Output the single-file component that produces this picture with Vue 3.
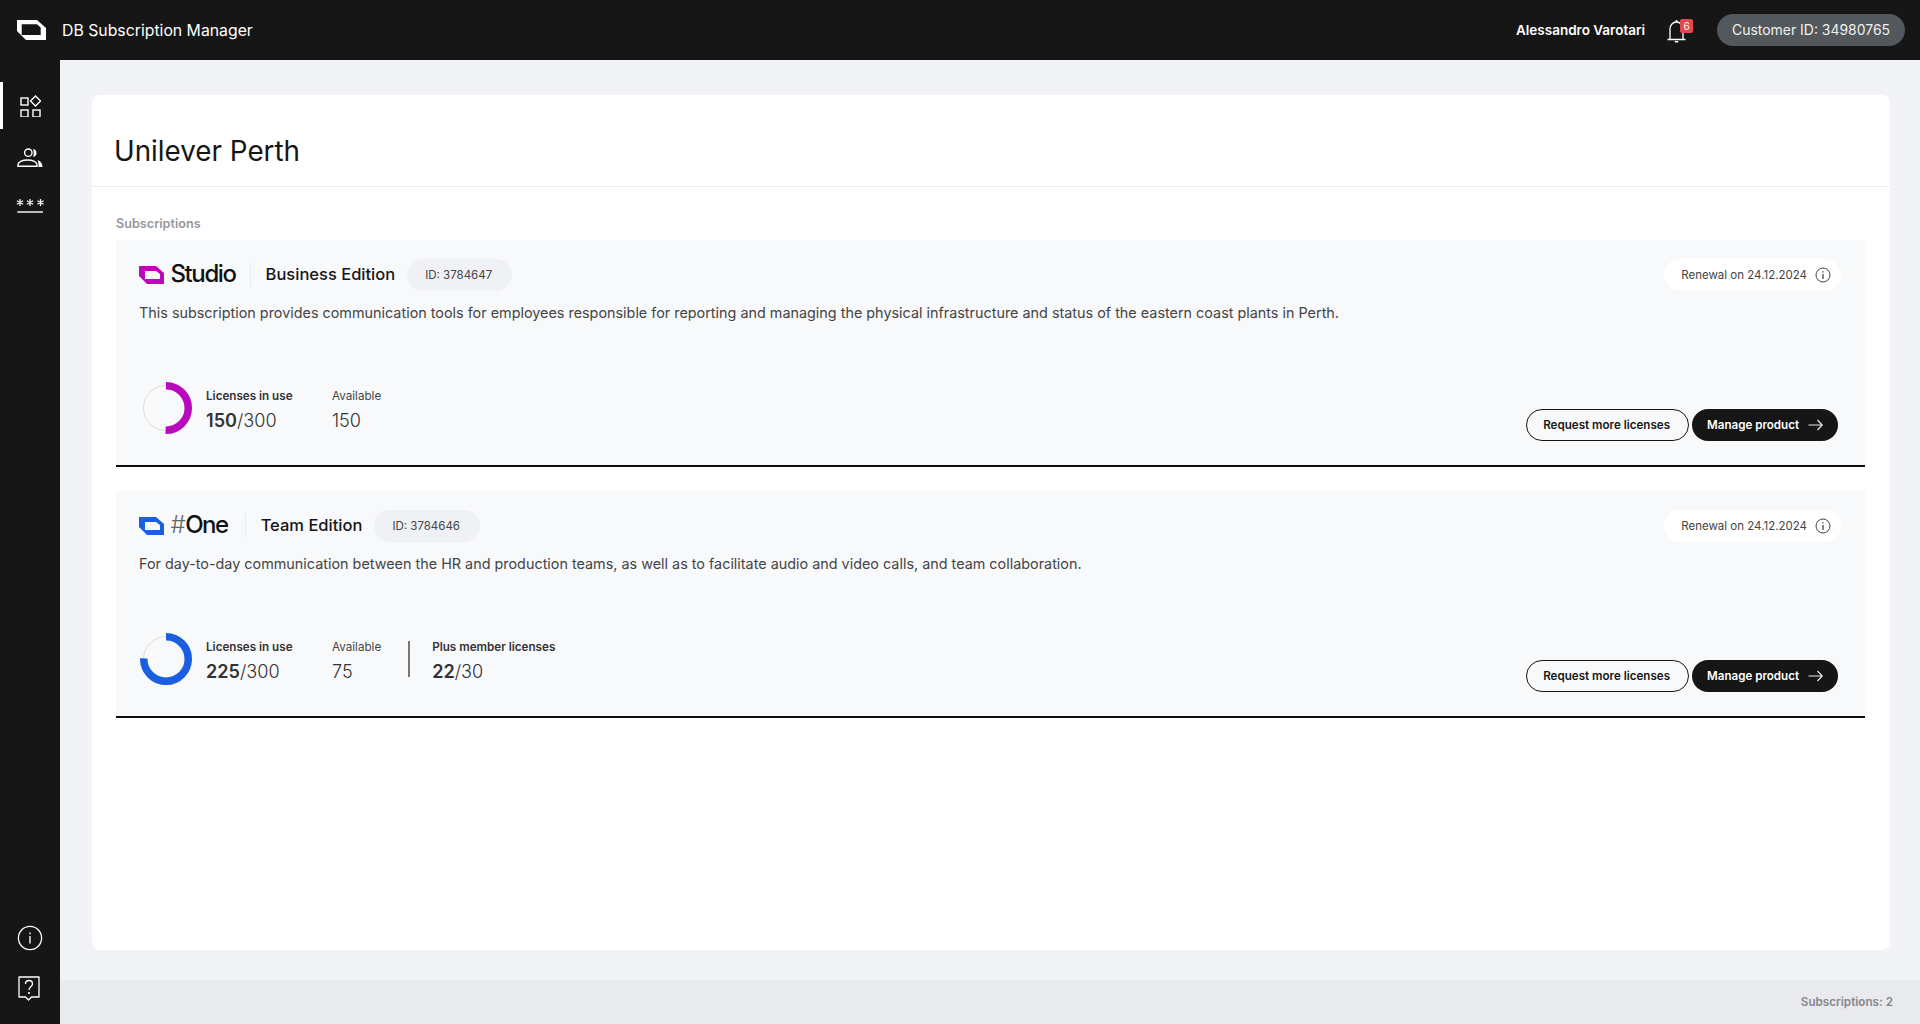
<script setup>
const subs = [
  {
    id: '3784647', name: 'Studio', hash: '', edition: 'Business Edition', color: '#b80abc',
    desc: 'This subscription provides communication tools for employees responsible for reporting and managing the physical infrastructure and status of the eastern coast plants in Perth.',
    used: 150, total: 300, available: 150, plus: null
  },
  {
    id: '3784646', name: 'One', hash: '#', edition: 'Team Edition', color: '#1a5fe0',
    desc: 'For day-to-day communication between the HR and production teams, as well as to facilitate audio and video calls, and team collaboration.',
    used: 225, total: 300, available: 75, plus: { used: 22, total: 30 }
  }
]
const r = 22.25
const circ = 2 * Math.PI * r
const dash = (s) => `${(s.used / s.total) * circ} ${circ}`
const starCenters = [5, 15, 25.5]
const spokes = (cx) => `M${cx} 2V9M${cx - 3.1} 3.7L${cx + 3.1} 7.3M${cx - 3.1} 7.3L${cx + 3.1} 3.7`
</script>

<template>
  <div class="app">
    <header class="topbar">
      <div class="brand">
        <svg class="brand-logo" viewBox="0 0 29 20" width="29" height="20">
          <path fill="#fff" fill-rule="evenodd" d="M0 0H20L29 8V20H9L0 11ZM4.700 4.300V15H23.700V7.500L20 4.300Z" />
        </svg>
        <span class="brand-name">DB Subscription Manager</span>
      </div>
      <div class="top-right">
        <span class="user">Alessandro Varotari</span>
        <div class="bell">
          <svg viewBox="0 0 20 25" width="20" height="25" fill="none" stroke="#fff" stroke-width="1.300">
            <path d="M3 21V11C3 7 6 4 9.500 4S16 7 16 11V21M0.500 21.500H18.500" />
            <path d="M9.500 2V4M7.800 23.800H11.200" stroke-width="1.600" />
          </svg>
          <span class="badge">6</span>
        </div>
        <span class="customer">Customer ID: 34980765</span>
      </div>
    </header>

    <div class="body">
      <nav class="sidebar">
        <div class="nav-top">
          <a class="nav-item active">
            <svg viewBox="0 0 22 22" width="22" height="22" fill="none" stroke="#fff" stroke-width="1.400">
              <rect x="2" y="3" width="7" height="7" />
              <path d="M16.500 1 21.500 6 16.500 11 11.500 6Z" />
              <rect x="2" y="15" width="7" height="7" />
              <rect x="14" y="15" width="7" height="7" />
            </svg>
          </a>
          <a class="nav-item">
            <svg viewBox="0 0 26 20" width="26" height="20" fill="none" stroke="#fff" stroke-width="1.400">
              <circle cx="11.300" cy="4.700" r="3.700" />
              <path d="M1 18.300V16.500C1 14 5 12 10.500 12S20 14 20 16.500V18.300H1Z" />
              <path d="M16 1C18.500 1.500 19.500 3 19.500 5S18.500 8.500 16 9C17 7 17 3 16 1Z" fill="#fff" stroke="none" />
              <path d="M20.500 12C23.500 13 25.500 15.500 25.500 19H21.500C21.500 16 21.500 14 20.500 12Z" fill="#fff" stroke="none" />
            </svg>
          </a>
          <a class="nav-item stars">
            <svg viewBox="0 0 30 20" width="30" height="20" fill="none" stroke="#f2f2f2" stroke-width="1.300">
              <path v-for="c in starCenters" :key="c" :d="spokes(c)" />
              <path d="M2.300 15H28" stroke="#cfcfcf" stroke-width="1.800" />
            </svg>
          </a>
        </div>
        <div class="nav-bottom">
          <svg viewBox="0 0 26 26" width="26" height="26" fill="none" stroke="#fff" stroke-width="1.300">
            <circle cx="13" cy="13" r="11.600" />
            <path d="M13 11V18.500" stroke-width="1.800" stroke="#c8c8c8" />
            <path d="M13 7.500V9.200" stroke-width="1.800" stroke="#c8c8c8" />
          </svg>
          <svg class="help" viewBox="0 0 24 26" width="24" height="26" fill="none" stroke="#fff" stroke-width="1.300">
            <path d="M2 1H22V21H14.500L11.500 24 8.500 21H2Z" stroke-linejoin="round" />
            <path d="M8.500 8C8.500 5.500 10 4.500 12 4.500S15.500 6 15.500 8C15.500 10.500 12 10.500 12 14" />
            <path d="M12 16V18" stroke-width="1.600" />
          </svg>
        </div>
      </nav>

      <main class="main">
        <div class="content">
          <section class="panel">
            <div class="panel-head">
              <h1>Unilever Perth</h1>
            </div>
            <div class="panel-body">
              <div class="label">Subscriptions</div>
              <div class="list">
                <article v-for="s in subs" :key="s.id" class="sub">
                  <div class="sub-top">
                    <div class="sub-title">
                      <svg class="sub-logo" viewBox="0 0 25 18" width="25" height="18">
                        <path :fill="s.color" fill-rule="evenodd" d="M0 0H17L25 7V18H8L0 10ZM6 5V13H21V8L17 5Z" />
                      </svg>
                      <span class="product" :class="{ 'product-hash': s.hash }"><span v-if="s.hash" class="hash">{{ s.hash }}</span>{{ s.name }}</span>
                      <span class="divider"></span>
                      <span class="edition">{{ s.edition }}</span>
                      <span class="id-pill">ID: {{ s.id }}</span>
                    </div>
                    <div class="renewal">
                      <span>Renewal on 24.12.2024</span>
                      <svg viewBox="0 0 16 16" width="16" height="16" fill="none" stroke="#444" stroke-width="1">
                        <circle cx="8" cy="8" r="7" />
                        <path d="M8 7V12M8 4.200V5.600" stroke-width="1.300" />
                      </svg>
                    </div>
                  </div>
                  <p class="desc">{{ s.desc }}</p>
                  <div class="sub-bottom">
                    <div class="stats">
                      <svg class="donut" viewBox="0 0 52 52" width="52" height="52">
                        <circle cx="26" cy="26" r="22.500" fill="none" stroke="#dcdcdc" stroke-width="1" />
                        <circle cx="26" cy="26" :r="r" fill="none" :stroke="s.color" stroke-width="7.500"
                          :stroke-dasharray="dash(s)" transform="rotate(-90 26 26)" />
                      </svg>
                      <div class="stat stat-use">
                        <span class="stat-label strong">Licenses in use</span>
                        <span class="stat-value"><b>{{ s.used }}</b>/{{ s.total }}</span>
                      </div>
                      <div class="stat">
                        <span class="stat-label">Available</span>
                        <span class="stat-value">{{ s.available }}</span>
                      </div>
                      <template v-if="s.plus">
                        <span class="stat-sep"></span>
                        <div class="stat">
                          <span class="stat-label strong">Plus member licenses</span>
                          <span class="stat-value"><b>{{ s.plus.used }}</b>/{{ s.plus.total }}</span>
                        </div>
                      </template>
                    </div>
                    <div class="actions">
                      <button class="btn outline">Request more licenses</button>
                      <button class="btn solid">
                        Manage product
                        <svg viewBox="0 0 15 12" width="15" height="12" fill="none" stroke="#e8e8e8" stroke-width="1.200">
                          <path d="M0.500 6H14M9.500 1 14.200 6 9.500 11" />
                        </svg>
                      </button>
                    </div>
                  </div>
                </article>
              </div>
            </div>
          </section>
        </div>
        <footer class="footer">Subscriptions: 2</footer>
      </main>
    </div>
  </div>
</template>

<style>
html, body { margin: 0; padding: 0; }
</style>

<style scoped>
.app {
  width: 1920px;
  height: 1024px;
  display: flex;
  flex-direction: column;
  overflow: hidden;
  font-family: Inter, "Liberation Sans", sans-serif;
  color: #161616;
}
.topbar {
  height: 60px;
  flex: none;
  background: #161616;
  display: flex;
  align-items: center;
  justify-content: space-between;
  padding: 0 15px 0 17px;
}
.brand { display: flex; align-items: center; gap: 16px; }
.brand-logo { display: block; margin-top: -1px; }
.brand-name { color: #fff; font-size: 15.800px; font-weight: 400; }
.top-right { display: flex; align-items: center; }
.user { color: #fff; font-size: 13.500px; font-weight: 600; }
.bell { position: relative; width: 26px; height: 26px; margin-left: 22px; margin-right: 24px; padding-top: 1px; box-sizing: border-box; }
.bell svg { display: block; }
.badge {
  position: absolute;
  top: 2px;
  left: 13px;
  width: 13px;
  height: 14px;
  border-radius: 2px;
  background: #e5474f;
  color: #fff;
  font-size: 10px;
  line-height: 14px;
  text-align: center;
}
.customer {
  height: 32px;
  line-height: 32px;
  padding: 0 15px;
  border-radius: 16px;
  background: #52585c;
  color: #f0f0f0;
  font-size: 13.950px;
}
.body { flex: 1; display: flex; min-height: 0; }
.sidebar {
  width: 60px;
  flex: none;
  background: #161616;
  display: flex;
  flex-direction: column;
  justify-content: space-between;
}
.nav-top { padding-top: 22px; display: flex; flex-direction: column; gap: 5px; }
.nav-item {
  height: 47px;
  display: flex;
  align-items: center;
  justify-content: center;
  position: relative;
}
.nav-item.active::before {
  content: "";
  position: absolute;
  left: 0;
  top: 0;
  width: 3px;
  height: 100%;
  background: #fff;
}
.nav-item.stars { height: 41px; }
.nav-bottom {
  display: flex;
  flex-direction: column;
  align-items: center;
  gap: 25px;
  padding-bottom: 22px;
}
.help { margin-right: 2px; }
.main { flex: 1; display: flex; flex-direction: column; min-width: 0; background: #f1f3f7; }
.content { flex: 1; padding: 35px 30px 30px 32px; min-height: 0; display: flex; }
.panel { flex: 1; background: #fff; border-radius: 8px; display: flex; flex-direction: column; }
.panel-head { height: 92px; box-sizing: border-box; border-bottom: 1px solid #ecedf0; padding: 37px 22px 0; }
h1 { margin: 0; font-size: 27.800px; line-height: 38px; font-weight: 400; color: #161616; }
.panel-body { padding: 29px 25px 0 24px; }
.label { font-size: 12.650px; line-height: 16px; font-weight: 600; color: #96999e; margin-bottom: 8px; }
.list { display: flex; flex-direction: column; gap: 24px; }
.sub {
  height: 227px;
  box-sizing: border-box;
  background: #f8f9fb;
  border-bottom: 2px solid #0e0e0e;
  padding: 19px 24px 0 23px;
  display: flex;
  flex-direction: column;
}
.sub-top { display: flex; align-items: center; justify-content: space-between; height: 32px; }
.sub-title { display: flex; align-items: center; }
.sub-logo { display: block; margin-left: -0.500px; margin-right: 7px; }
.product { font-size: 24px; line-height: 30px; padding-bottom: 2px; font-weight: 500; letter-spacing: -1.400px; color: #111; }
.product-hash { padding-right: 3px; letter-spacing: -1.500px; }
.hash { font-weight: 300; color: #666; margin-right: 1px; }
.divider { width: 1px; height: 24px; background: #e8e9ec; margin: 0 15px 0 14px; }
.edition { font-size: 16.500px; line-height: 30px; padding-bottom: 2px; font-weight: 500; color: #161616; }
.id-pill {
  margin-left: 12px;
  height: 32px;
  line-height: 32px;
  padding: 0 20px 0 18px;
  border-radius: 16px;
  background: #f0f1f5;
  font-size: 11.500px;
  color: #444;
}
.renewal {
  display: flex;
  align-items: center;
  gap: 8px;
  height: 32px;
  padding: 0 10px 0 17px;
  border-radius: 16px;
  background: #fff;
  font-size: 11.500px;
  color: #444;
}
.desc { margin: 12px 0 0; font-size: 14.380px; line-height: 20px; color: #444; }
.sub-bottom {
  flex: 1;
  display: flex;
  align-items: flex-end;
  justify-content: space-between;
  padding-bottom: 24px;
}
.stats { display: flex; align-items: center; margin-bottom: 7px; margin-left: 1px; }
.donut { display: block; margin-right: 14px; }
.stat { display: flex; flex-direction: column; padding-top: 4px; }
.stat-use { width: 126px; }
.stat-label { font-size: 11.650px; line-height: 16px; color: #444; }
.stat-label.strong { font-weight: 600; color: #333; }
.stat-value { font-size: 18.100px; line-height: 24px; font-weight: 300; color: #333; margin-top: 4px; }
.stat-value b { font-weight: 600; }
.stat-sep { width: 2px; height: 36px; background: #777; margin: 0 22px 0 27px; }
.actions { display: flex; gap: 3px; margin-right: 3px; }
.btn {
  height: 32px;
  box-sizing: border-box;
  border-radius: 16px;
  font-family: inherit;
  font-size: 11.600px;
  font-weight: 600;
  display: flex;
  align-items: center;
  cursor: pointer;
}
.btn.outline { border: 1px solid #161616; background: transparent; color: #161616; padding: 0 18px 0 16px; }
.btn.solid { border: none; background: #161616; color: #fff; padding: 0 15px; gap: 9px; }
.footer {
  height: 44px;
  flex: none;
  box-sizing: border-box;
  background: #e8eaee;
  text-align: right;
  padding-right: 27px;
  font-size: 11.700px;
  line-height: 44px;
  font-weight: 600;
  color: #85888d;
}
</style>
